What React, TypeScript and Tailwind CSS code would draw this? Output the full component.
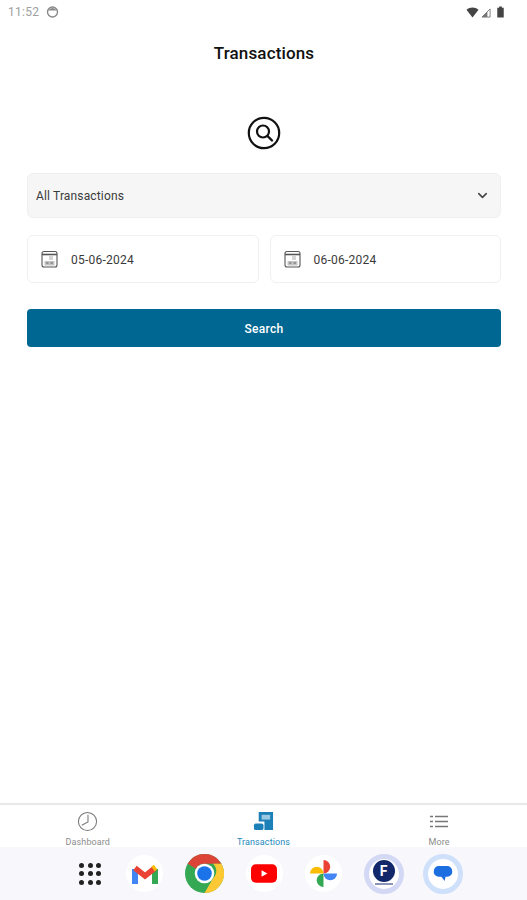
import { ChevronDown } from 'lucide-react';

function StatusBar() {
    return (
        <div className="h-[24px] flex items-center justify-between pl-[8px] pr-[22px]">
            <div className="flex items-center gap-[7px]">
                <span className="text-[12px] tracking-[0.3px] text-[#a0a0a0]">11:52</span>
                <svg width="13" height="12" viewBox="0 0 13 12" className="text-[#888]">
                    <circle cx="6.5" cy="6" r="5" fill="none" stroke="currentColor" strokeWidth="1.4" />
                    <path d="M2.5 4.6a4.2 3.6 0 0 1 8 0z" fill="currentColor" />
                </svg>
            </div>
            <div className="flex items-center gap-[2px]">
                <svg width="13" height="11" viewBox="0 0 13 11" className="text-[#444]">
                    <path d="M0.5 2.8C4 -0.4 9 -0.4 12.5 2.8L6.5 10.5z" fill="currentColor" />
                </svg>
                <svg width="10" height="10" viewBox="0 0 11 11" className="text-[#777] mt-[1px]">
                    <path d="M10 1v9H1z" fill="none" stroke="currentColor" strokeWidth="1" />
                    <path d="M7 4v6H1z" fill="currentColor" />
                </svg>
                <svg width="9" height="12" viewBox="0 0 9 13" className="ml-[3px] -mt-[1px] text-[#444]">
                    <path d="M3 0.5h3v1.5h2v10.5H1V2h2z" fill="currentColor" />
                </svg>
            </div>
        </div>
    );
}

function SearchBadge() {
    return (
        <svg width="34" height="34" viewBox="0 0 34 34" fill="none" stroke="#111" strokeWidth="2.2">
            <circle cx="17" cy="17" r="15.2" />
            <circle cx="16" cy="15.5" r="6" />
            <path d="M20.5 20l4.5 4.5" strokeLinecap="round" strokeWidth="2.4" />
        </svg>
    );
}

function CalendarIcon() {
    return (
        <svg width="17" height="18" viewBox="0 0 17 18" fill="none" stroke="#555" strokeWidth="1.1">
            <rect x="1" y="1.5" width="15" height="15.5" rx="2" />
            <path d="M1 4.5h15" strokeWidth="1.6" />
            <path d="M8 7h4M8 9h4" stroke="#aaa" />
            <rect x="3.5" y="11" width="10" height="4.5" fill="#c4c4c4" stroke="none" />
            <path d="M5 13h2.5M9.5 13h2.5" stroke="#666" strokeWidth="1" />
        </svg>
    );
}

function DateField({ value }: { value: string }) {
    return (
        <div className="flex-1 h-[48px] flex items-center pl-[13px] gap-[13px] bg-white border border-[#f0f0f0] rounded-[6px]">
            <CalendarIcon />
            <span className="pt-[1px] text-[12px] tracking-[0.25px] text-[#3a3a3a]">{value}</span>
        </div>
    );
}

function NavItem({ label, active, children }: { label: string; active?: boolean; children: React.ReactNode }) {
    return (
        <div className="w-[176px] flex flex-col items-center">
            <div className="h-[24px] flex items-center">{children}</div>
            <span className={`mt-[4px] text-[9px] leading-[10px] tracking-[0.1px] ${active ? 'text-[#2389bd]' : 'text-[#8c8c8c]'}`}>
                {label}
            </span>
        </div>
    );
}

function BottomNav() {
    return (
        <div className="h-[44px] flex justify-center pt-[4px] bg-white border-t-2 border-[#e9e9e9]">
            <NavItem label="Dashboard">
                <svg width="21" height="21" viewBox="0 0 22 22" fill="none" stroke="#777" strokeWidth="1.1">
                    <circle cx="11" cy="11" r="9.5" />
                    <path d="M11.5 4v7.5L5 15" />
                </svg>
            </NavItem>
            <NavItem label="Transactions" active>
                <svg width="21" height="21" viewBox="0 0 22 22">
                    <path d="M6 1h15v19H12v-9H6z" fill="#1b7fb8" />
                    <rect x="9" y="4" width="9" height="5" fill="#9cc9e2" />
                    <rect x="1" y="13" width="10" height="7" rx="2" fill="#1b7fb8" />
                </svg>
            </NavItem>
            <NavItem label="More">
                <svg width="18" height="13" viewBox="0 0 18 13" stroke="#777" strokeWidth="1.3">
                    <path d="M0 1.5h3M5 1.5h13M0 6.5h3M5 6.5h13M0 11.5h3M5 11.5h13" />
                </svg>
            </NavItem>
        </div>
    );
}

function AppDots() {
    return (
        <div className="grid grid-cols-3 gap-[3.5px]">
            {[0, 1, 2, 3, 4, 5, 6, 7, 8].map(i => (
                <div key={i} className="w-[5px] h-[5px] rounded-full bg-[#222]" />
            ))}
        </div>
    );
}

function GmailIcon() {
    return (
        <svg width="26" height="20" viewBox="0 0 26 20" fill="none">
            <path d="M3 20V5" stroke="#4285f4" strokeWidth="6" />
            <path d="M23 20V5" stroke="#34a853" strokeWidth="6" />
            <path d="M3 4l10 8 10-8" stroke="#ea4335" strokeWidth="5.5" />
            <path d="M21 5l2.5-2" stroke="#fbbc04" strokeWidth="5.5" />
        </svg>
    );
}

function ChromeIcon() {
    return (
        <svg width="39" height="39" viewBox="0 0 48 48">
            <circle cx="24" cy="24" r="24" fill="#34a853" />
            <path d="M24 0a24 24 0 0 1 20.8 12H24a12 12 0 0 0-10.4 6L3.2 12A24 24 0 0 1 24 0z" fill="#db4437" />
            <path d="M44.8 12A24 24 0 0 1 24 48l10.4-18a12 12 0 0 0 0-18z" fill="#fcc934" />
            <circle cx="24" cy="24" r="12" fill="#fff" />
            <circle cx="24" cy="24" r="9" fill="#1a73e8" />
        </svg>
    );
}

function YoutubeIcon() {
    return (
        <svg width="26" height="19" viewBox="0 0 27 19">
            <rect width="27" height="19" rx="5" fill="#f00" />
            <path d="M11 6l6 3.5-6 3.5z" fill="#fff" />
        </svg>
    );
}

function PhotosIcon() {
    return (
        <svg width="29" height="29" viewBox="0 0 30 30">
            <path d="M15 15V1a7 7 0 0 1 0 14z" fill="#ea4335" />
            <path d="M15 15h14a7 7 0 0 1-14 0z" fill="#4285f4" />
            <path d="M15 15v14a7 7 0 0 1 0-14z" fill="#34a853" />
            <path d="M15 15H1a7 7 0 0 1 14 0z" fill="#fbbc04" />
        </svg>
    );
}

function DockIcon({ children, ring }: { children: React.ReactNode; ring?: string }) {
    return (
        <div className="w-[59.7px] flex justify-center">
            <div className={`rounded-full flex items-center justify-center bg-white ${ring ?? 'w-[37px] h-[37px]'}`}>
                {children}
            </div>
        </div>
    );
}

function Dock() {
    return (
        <div className="h-[53px] flex items-center pl-[65px] bg-[#f8f7fc]">
            <div className="w-[50px] flex justify-center">
                <AppDots />
            </div>
            <DockIcon><GmailIcon /></DockIcon>
            <div className="w-[59.7px] flex justify-center"><ChromeIcon /></div>
            <DockIcon><YoutubeIcon /></DockIcon>
            <DockIcon><PhotosIcon /></DockIcon>
            <DockIcon ring="w-[40px] h-[40px] border-[5px] border-[#d3d8f4]">
                <div className="flex flex-col items-center">
                    <div className="w-[22px] h-[22px] -mt-[3px] rounded-full bg-[#12286b] flex items-center justify-center">
                        <span className="text-[14px] leading-none font-bold text-white">F</span>
                    </div>
                    <div className="mt-[1px] w-[18px] h-[2px] bg-[#8c94b8]" />
                </div>
            </DockIcon>
            <DockIcon ring="w-[40px] h-[40px] border-[5px] border-[#cfe0fb]">
                <svg width="20" height="17" viewBox="0 0 24 20">
                    <path d="M7 1h10a6 6 0 0 1 6 6 6 6 0 0 1-6 7h-2l-1 5-4-5H7a6 6 0 0 1-6-7 6 6 0 0 1 6-6z" fill="#1b6fe0" />
                </svg>
            </DockIcon>
        </div>
    );
}

export default function App() {
    return (
        <div className="h-[900px] flex flex-col bg-white font-['Roboto',sans-serif]">
            <StatusBar />

            {/* Header */}
            <h1 className="mt-[18px] pl-[1px] text-center text-[17px] leading-[22px] font-medium tracking-[0.15px] text-[#111]">Transactions</h1>

            <div className="mt-[52px] flex justify-center">
                <SearchBadge />
            </div>

            {/* Form */}
            <div className="mt-[23px] pl-[27px] pr-[26px]">
                <div className="h-[45px] flex items-center justify-between pl-[8px] pr-[10px] bg-[#f6f6f6] border border-[#f0f0f0] rounded-[6px]">
                    <span className="pt-[1px] text-[12px] tracking-[0.15px] text-[#3a3a3a]">All Transactions</span>
                    <ChevronDown className="w-[15px] h-[15px] text-[#444]" strokeWidth={2.5} />
                </div>
                <div className="mt-[17px] flex gap-[11px]">
                    <DateField value="05-06-2024" />
                    <DateField value="06-06-2024" />
                </div>
                <button className="mt-[26px] w-full h-[38px] pt-[1px] rounded-[4px] bg-[#006793] text-white text-[12px] font-medium tracking-[0.3px]">
                    Search
                </button>
            </div>

            <div className="flex-1" />

            <BottomNav />
            <Dock />
        </div>
    );
}
